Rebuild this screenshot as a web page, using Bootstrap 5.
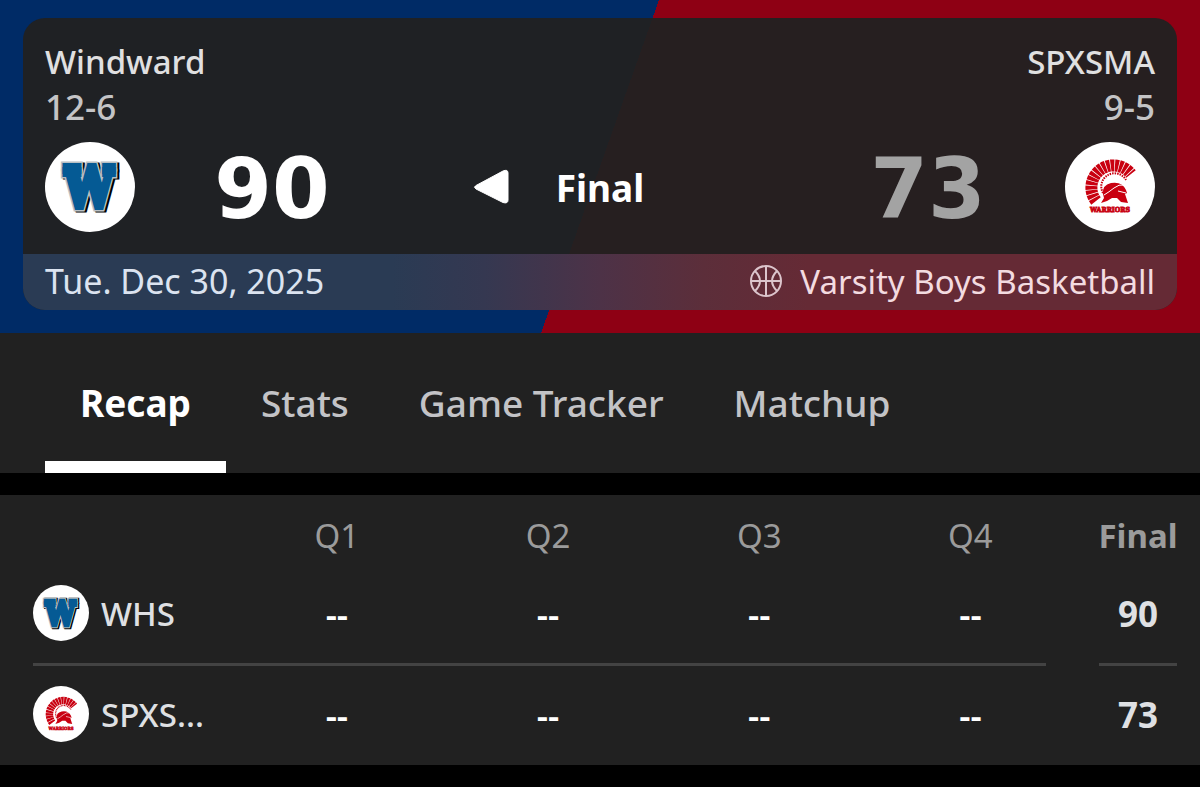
<!DOCTYPE html>
<html lang="en">
<head>
<meta charset="utf-8">
<meta name="viewport" content="width=device-width, initial-scale=1">
<title>Windward vs SPXSMA</title>
<link href="https://cdn.jsdelivr.net/npm/bootstrap@5.3.0/dist/css/bootstrap.min.css" rel="stylesheet">
<style>
body { background: #000; color: #dfe0e3; font-family: "Noto Sans", sans-serif; font-size: 33px; line-height: 45px; }
.hero { background: linear-gradient(109.5deg, #002b66 50%, #8e0014 50%); padding: 18px 23px 23px; }
.scorecard { background: rgba(33, 33, 33, .95); border-radius: 22px; overflow: hidden; }
.scorecard-main { padding: 21px 22px 22px; }
.team-name { font-weight: 500; color: #e0e0e1; }
.team-record { font-size: 35px; font-weight: 500; color: #c4c4c6; }
.score-row { display: grid; grid-template-columns: 90px 274px 1fr 274px 90px; align-items: center; margin-top: 13px; }
.logo-lg { width: 90px; height: 90px; }
.logo-sm { width: 56px; height: 56px; }
.score { font-family: "DejaVu Sans", sans-serif; font-size: 83px; line-height: 84px; padding-top: 6px; font-weight: 700; color: #fff; text-align: center; }
.score-lost { color: #a3a3a3; }
.status { display: grid; grid-template-columns: 1fr auto 1fr; align-items: center; font-size: 37px; font-weight: 700; color: #fff; }
.winner-mark { width: 37px; height: 37px; margin-right: 46px; }
.info-strip { background: linear-gradient(90deg, #2a3b54 32%, #353851 40%, #4d3247 50%, #5c2e3a 59%, #652a35 68%); padding: 5px 22px 6px; color: #dbe3f0; }
.game-date { font-size: 34px; }
.sport { color: #f3dbe0; gap: 16px; }
.tabs { background: #212121; padding: 0 45px; }
.tabs .nav-link { border: 0; border-radius: 0; border-bottom: 12px solid transparent; padding: 47px 35px 36px; font-size: 37px; font-weight: 500; color: #c3c3c6; }
.tabs .nav-link.active { color: #fff; font-weight: 700; border-color: #fff; }
.box-score { background: #212121; margin-top: 22px; }
.box-score table { table-layout: fixed; width: 100%; text-align: center; }
.box-score tbody th, .box-score tbody td { padding: 0 0 3px; height: 99px; }
.box-score thead > tr > * { height: 68px; padding: 13px 0 0; font-weight: 400; color: #9b9b9b; }
.box-score thead .col-final { font-weight: 700; }
.col-quarter { width: 17.6%; }
.col-final { width: 124px; font-weight: 700; }
.box-score tbody .col-final { font-size: 35px; }
.box-score tbody th { padding-left: 33px; font-weight: 500; }
.team-cell { gap: 12px; }
.dash { color: #fff; font-size: 35px; font-weight: 600; }
/* Divider between the teams, with a gap before the final column */
.box-score .ruled > * { height: 103px; background: linear-gradient(#434343, #434343) no-repeat left bottom / 100% 3px; }
.box-score .ruled > th { background-position: 33px bottom; }
.box-score .ruled > .last-quarter { background-size: calc(100% - 30px) 3px; }
.box-score .ruled > .col-final { background-size: 78px 3px; background-position: center bottom; }
</style>
</head>
<body>
<svg class="d-none" aria-hidden="true">
  <symbol id="logo-windward" viewBox="5 5 90 90">
    <circle cx="50" cy="50" r="45" fill="#fff"/>
    <g font-family="DejaVu Serif Condensed, DejaVu Serif, serif" font-weight="700" font-size="48" text-anchor="middle" stroke-linejoin="miter">
      <g fill="#000" stroke="#000" stroke-width="7"><text x="51" y="65">W</text><text x="51" y="72">W</text></g>
      <g fill="#b9c0c4" stroke="#b9c0c4" stroke-width="7"><text x="49" y="64">W</text><text x="49" y="71">W</text></g>
      <g fill="#055a94" stroke="#055a94" stroke-width="4"><text x="49" y="64">W</text><text x="49" y="68">W</text><text x="49" y="71">W</text></g>
    </g>
  </symbol>
  <symbol id="logo-warriors" viewBox="5 5 90 90">
    <circle cx="50" cy="50" r="45" fill="#fff"/>
    <path d="M36 64A20 20 0 0 1 71 37" fill="none" stroke="#c90010" stroke-width="12" stroke-dasharray="3.500 .7"/>
    <path d="M43 56A13 13 0 0 1 66 43" fill="none" stroke="#c90010" stroke-width="2" stroke-dasharray="1.500 1"/>
    <path d="M43 57Q42 48 51 46Q62 44 66 53L67 56L65 57L68 66L61 65L57 61L52 61L47 64L41 66L44 61Z" fill="#c90010"/>
    <path d="M44 58Q49 55 54 51T64 48M58 54L66 56" fill="none" stroke="#fff" stroke-width="1"/>
    <text x="50" y="75" fill="#c90010" stroke="#c90010" stroke-width=".8" font-family="DejaVu Serif Condensed, DejaVu Serif, serif" font-weight="700" font-size="7" text-anchor="middle">WARRIORS</text>
  </symbol>
</svg>

<header class="hero">
  <section class="scorecard">
    <div class="scorecard-main">
      <div class="d-flex justify-content-between">
        <div><div class="team-name">Windward</div><div class="team-record">12-6</div></div>
        <div class="text-end"><div class="team-name">SPXSMA</div><div class="team-record">9-5</div></div>
      </div>
      <div class="score-row">
        <svg class="logo-lg" role="img" aria-label="Windward"><use href="#logo-windward"/></svg>
        <div class="score">90</div>
        <div class="status">
          <svg class="winner-mark ms-auto" viewBox="0 0 37 37" aria-hidden="true"><path d="M3 16.500L30 2Q35 0 35 4V31Q35 35 30 33.500L3 20Q0 18 3 16.500Z" fill="#fff" stroke="#fff" stroke-width="1"/></svg>
          <span>Final</span>
        </div>
        <div class="score score-lost">73</div>
        <svg class="logo-lg" role="img" aria-label="SPXSMA"><use href="#logo-warriors"/></svg>
      </div>
    </div>
    <div class="info-strip d-flex justify-content-between">
      <span class="game-date">Tue. Dec 30, 2025</span>
      <span class="sport d-flex align-items-center">
        <svg width="34" height="34" viewBox="0 0 34 34" fill="none" stroke="#dcc5cc" stroke-width="2" aria-hidden="true"><circle cx="16" cy="16" r="15"/><path d="M16 1V31M1 16H31M5 6Q15 16 5 26M27 6Q17 16 27 26"/></svg>
        Varsity Boys Basketball
      </span>
    </div>
  </section>
</header>

<nav class="nav tabs" aria-label="Game sections">
  <a class="nav-link active" aria-current="page" href="#recap">Recap</a>
  <a class="nav-link" href="#stats">Stats</a>
  <a class="nav-link" href="#tracker">Game Tracker</a>
  <a class="nav-link" href="#matchup">Matchup</a>
</nav>

<main class="box-score" id="recap">
  <table>
    <thead>
      <tr>
        <td></td>
        <th scope="col" class="col-quarter">Q1</th>
        <th scope="col" class="col-quarter">Q2</th>
        <th scope="col" class="col-quarter">Q3</th>
        <th scope="col" class="col-quarter">Q4</th>
        <th scope="col" class="col-final">Final</th>
      </tr>
    </thead>
    <tbody>
      <tr class="ruled">
        <th scope="row"><div class="team-cell d-flex align-items-center"><svg class="logo-sm" aria-hidden="true"><use href="#logo-windward"/></svg>WHS</div></th>
        <td class="dash">--</td><td class="dash">--</td><td class="dash">--</td><td class="dash last-quarter">--</td>
        <td class="col-final">90</td>
      </tr>
      <tr>
        <th scope="row"><div class="team-cell d-flex align-items-center"><svg class="logo-sm" aria-hidden="true"><use href="#logo-warriors"/></svg>SPXS...</div></th>
        <td class="dash">--</td><td class="dash">--</td><td class="dash">--</td><td class="dash">--</td>
        <td class="col-final">73</td>
      </tr>
    </tbody>
  </table>
</main>
<script src="https://cdn.jsdelivr.net/npm/bootstrap@5.3.0/dist/js/bootstrap.bundle.min.js"></script>
</body>
</html>
